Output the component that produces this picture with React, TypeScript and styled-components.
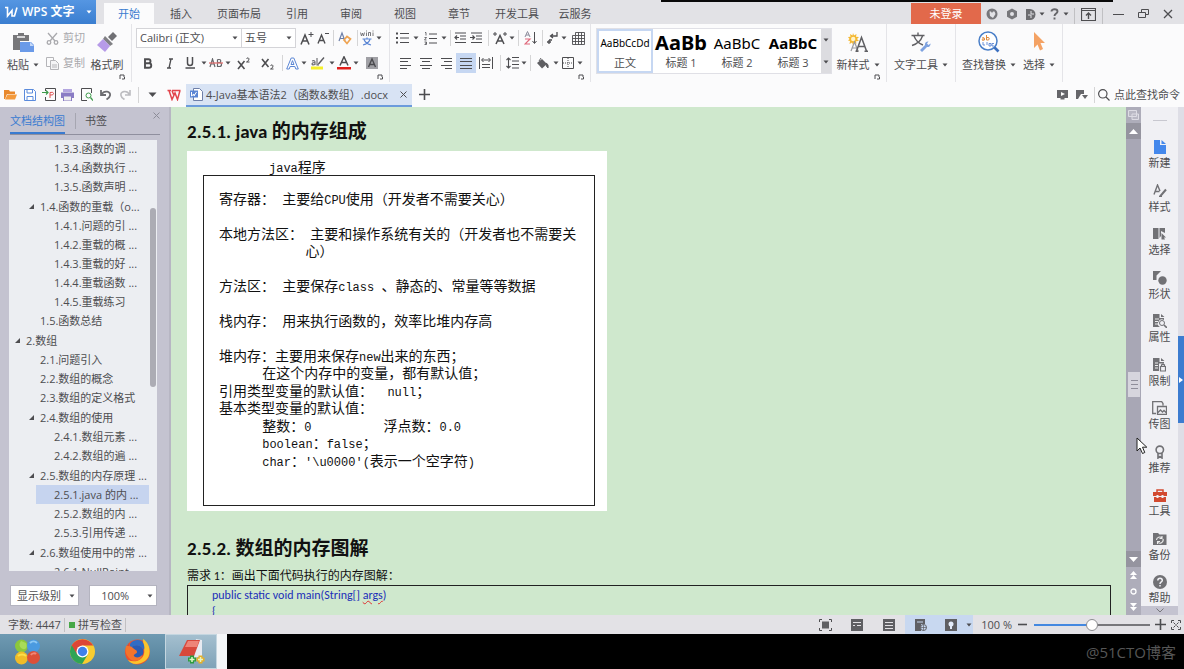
import React from "react";
import styled, { createGlobalStyle, css } from "styled-components";

const ui = `"Open Sans", "Noto Sans CJK SC", sans-serif`;
const ink = "#4d4d50";
const blue = "#3a7bd0";

const Global = createGlobalStyle`
  * { box-sizing: border-box; }
  html, body { margin: 0; padding: 0; }
  body { font: 11px/16px ${ui}; color: ${ink}; background: #fff; }
  button, select, input { font: inherit; color: inherit; margin: 0; padding: 0; border: 0; background: none; }
  svg { display: block; flex: none; }
  h2, p, ul { margin: 0; padding: 0; }
  ul { list-style: none; }
`;

/* ---------- icons ---------- */

const S = { fill: "none", stroke: "currentColor", strokeWidth: 1 } as const;

const art: Record<string, [number, number, React.ReactNode]> = {
  wps: [14, 12, <path d="M1 1.500h2.500v8.500l4.500-5.500v5.500l2.500 0 2.500-8.500" fill="none" stroke="#fff" strokeWidth="1.600" />],
  caret: [6, 4, <path d="M0.500 0.500h5l-2.500 3z" fill="currentColor" />],
  bigcaret: [9, 6, <path d="M0.500 0.500h8l-4 4.500z" fill="currentColor" />],
  corner: [6, 6, <path d="M1 5V1h4v2M3 5h2.500V3" {...S} />],
  paste: [22, 20, <><path d="M1 3h5V1h6v2h5v6H8v9H1z" fill="#77777a" /><path d="M5 4h8v2H5z" fill="#d8d8da" /><path d="M8 10h11l3 3v7H8z" fill="#6a9ae8" /><path d="M18 10v4h4z" fill="#c4d8f8" /></>],
  cut: [13, 13, <g fill="none" stroke="#a9a9ad" strokeWidth="1.300"><path d="M2 1l7 8M11 1L4 9" /><circle cx="3" cy="10.500" r="1.800" /><circle cx="10" cy="10.500" r="1.800" /></g>],
  copy: [13, 13, <g fill="none" stroke="#b4b4b8"><path d="M.5.5h7v9h-7z" /><path d="M4.500 3.500h5l3 3v6h-8z" fill="#f4f4f6" /><path d="M6 8h5M6 10h5" /></g>],
  brush: [20, 20, <><path d="M16 0l4 4-5 5-4-4z" fill="#707074" /><path d="M8 4l8 8-3 2-7-7z" fill="#808084" /><path d="M6 7l7 7-5 6-8-7z" fill="#b79be8" /></>],
  grow: [14, 13, <><path d="M1 12.500L5 3l4 9.500M2.500 9h5" fill="none" stroke="currentColor" strokeWidth="1.500" /><path d="M8.500 2.500h5M11 0v5" {...S} /></>],
  shrink: [13, 12, <><path d="M1 11.500L4.500 3l3.500 8.500M2.500 8.500h4" fill="none" stroke="currentColor" strokeWidth="1.400" /><path d="M8 1.500h4" {...S} /></>],
  clear: [14, 14, <><path d="M1 10L4 2l3 8M2 7.500h4" fill="none" stroke="#6d7fa8" strokeWidth="1.200" /><path d="M6 9l3-3.500 3.500 2.500-3.500 4.500z" fill="none" stroke="#efa452" strokeWidth="1.700" /></>],
  pinyin: [14, 16, <><path d="M.5 2.500l1 3.500 1-3 1 3 1-3.500M6.500 2.500V6M8.500 6V2.500h2V6M13 2.500V6M13 .5v1M6.500.5v1" fill="none" stroke="#6c6c70" strokeWidth=".9" /><path d="M2.500 9h9M7 7.500V9M4 9.500c1 2.500 3 4.500 7 5.500M10 9.500c-1 2.500-3 4.500-7 5.500" fill="none" stroke="#5b86d4" strokeWidth="1.200" /></>],
  bold: [10, 11, <path d="M2 1.200h3.500a2 2 0 010 4H2zM2 5.200h4a2.200 2.200 0 010 4.500H2z" fill="none" stroke="currentColor" strokeWidth="1.900" />],
  italic: [8, 11, <path d="M3 1h4M1 10h4M5 1L3 10" fill="none" stroke="currentColor" strokeWidth="1.300" />],
  underline: [10, 12, <path d="M2.500 0v6a2.500 2.500 0 005 0V0M0.500 11h9.500" fill="none" stroke="currentColor" strokeWidth="1.500" />],
  strike: [14, 10, <><path d="M1 9l2.500-8L6 9M2 6h3M8.500 1.500v7h2a2 2 0 000-4h-2M8.500 1.500h1.800a1.500 1.500 0 010 3" fill="none" stroke="#66666a" strokeWidth="1.200" /><path d="M0 5h14" stroke="#e07070" strokeWidth="1.300" /></>],
  sup: [14, 13, <><path d="M1 4l6.500 8M7.500 4L1 12" fill="none" stroke="currentColor" strokeWidth="1.600" /><path d="M9.500 1.500q2-1.500 2.500.3T9.500 5h3" {...S} /></>],
  sub: [14, 13, <><path d="M1 2l6.500 8M7.500 2L1 10" fill="none" stroke="currentColor" strokeWidth="1.600" /><path d="M9.500 8.500q2-1.500 2.500.3T9.500 12h3" {...S} /></>],
  effect: [13, 13, <path d="M.7 12L5.200 1h2.600l4.500 11h-2.500L8.900 9.500H4.100L3.200 12zM5 7.500h3L6.500 3.600z" fill="#fff" stroke="#5b86d4" strokeWidth="1" />],
  highlight: [14, 14, <><path d="M0 10.500h12v3H0z" fill="#f5f02a" /><path d="M1 5q3-1 3 1v3M4 6.500q-3 0-3 1.500T4 8.500M6 2v7h2" fill="none" stroke="#66666a" strokeWidth="1.100" /><path d="M12.500 1l1 1-5 6-2 1 .8-2z" fill="#5c5c60" /></>],
  fontcolor: [14, 14, <><path d="M0 11h14v2.500H0z" fill="#e0201c" /><path d="M3 9.500L7 .8l4 8.700M4.500 6.500h5" fill="none" stroke="currentColor" strokeWidth="1.500" /></>],
  shade: [12, 12, <><path d="M0 0h12v12H0z" fill="#a0a0a5" /><path d="M2.500 10L6 2l3.500 8M4 7.500h4" fill="none" stroke="#4a4a4e" strokeWidth="1.400" /></>],
  bullets: [13, 12, <><path d="M4 1.500h9M4 6h9M4 10.500h9" {...S} /><path d="M0 .5h2v2H0zM0 5h2v2H0zM0 9.500h2v2H0z" fill="currentColor" /></>],
  numbers: [13, 13, <><path d="M5 2h8M5 6.500h8M5 11h8" {...S} /><path d="M1 .5h1v3M.5 5.500h2L.5 8h2M.5 10h2v2.500h-2M1 11.200h1.500" {...S} strokeWidth=".8" /></>],
  outdent: [13, 12, <path d="M1 1h11M6 4h6M6 7h6M1 10.500h11M1 5.500h4M3 3.500l-2 2 2 2" {...S} strokeWidth="1.200" />],
  indent: [13, 12, <path d="M1 1h11M6 4h6M6 7h6M1 10.500h11M0 5.500h4M2.500 3.500l2 2-2 2" {...S} strokeWidth="1.200" />],
  spread: [14, 13, <><path d="M3 12L7 3.500l4 8.500M4.500 9h5" fill="none" stroke="currentColor" strokeWidth="1.500" /><path d="M0 2h4M2 0v4M10 2h4M12 0v4" {...S} /></>],
  sort: [13, 14, <><path d="M1 6l2.500-5.500L6 6M2 4h3" fill="none" stroke="#8a8a9a" /><path d="M1 8h5l-5 5h5" fill="none" stroke="#e06a7c" strokeWidth="1.200" /><path d="M10.500 1v11M8.500 10l2 2.500 2-2.500" {...S} /></>],
  ret: [12, 12, <path d="M11 0v4H5M7 2L4.500 4 7 6M1 10h4M3 8v4M3 8h3" {...S} strokeWidth="1.300" />],
  grid: [13, 13, <path d="M3.500.5h9v12h-12v-9h3zM.5 6.500h12M.5 9.500h12M3.500 3.500v9M6.500.5v12M9.500.5v12M3.500 3.500h9" {...S} strokeWidth=".9" />],
  left: [12, 11, <path d="M0 .5h11M0 3.500h8M0 7.500h11M0 10.500h7" {...S} />],
  center: [12, 11, <path d="M0 .5h12M2 3.500h8M0 7.500h12M2 10.500h8" {...S} />],
  right: [12, 11, <path d="M1 .5h11M4 3.500h8M1 7.500h11M5 10.500h7" {...S} />],
  justify: [12, 11, <path d="M0 .5h12M0 3.500h12M0 7.500h12M0 10.500h12" {...S} />],
  distribute: [14, 12, <path d="M.5 0v12M13.500 0v12M3 3h8M4.500 1L2.500 3l2 2M9.500 1l2 2-2 2M3 7.500h8M3 10.500h8" {...S} />],
  spacing: [13, 12, <path d="M6 .5h7M6 4h7M6 7.500h7M6 11h7M2.500 1v10M.5 3l2-2 2 2M.5 9l2 2 2-2" {...S} strokeWidth="1.100" />],
  bucket: [13, 11, <><path d="M1 5l5-4 5 5-5 4.500z" fill="#5f5f63" /><path d="M10 5q3 1 2 5-2-1-2-5M3 3L5 0" fill="#5f5f63" stroke="#5f5f63" /></>],
  border: [12, 12, <><path d="M.5.5h11v11H.5z" {...S} /><path d="M6 1v10M1 6h10" {...S} strokeDasharray="1 1" /></>],
  newstyle: [20, 19, <><path d="M5 0l1 2.500L8.500 1 8 3.800l3 .2-2 2 2 2-3 .2.5 2.600L6 9.500 5 12 4 9.500 1.500 11 2 8l-2-.5L1.500 6 0 4l2.500-.2L2 1l2.500 1.500z" fill="#f4b832" /><circle cx="5.200" cy="6" r="2.200" fill="#fff3c8" /><path d="M3 18l3.500-9L10 18M4.500 15h4" fill="none" stroke="#9a9a9e" strokeWidth="1.200" /><path d="M8.500 18L13.500 4.500 18.500 18M10.500 13.500h6M7.500 18.300h3M16.500 18.300h3.500" fill="none" stroke="#606064" strokeWidth="1.500" /></>],
  texttool: [20, 20, <><path d="M.5 3.500h13M7 .5v3M3 4c1.500 4 5 7.500 9 9M11.500 4C10 8.500 6 12 1 13.500" fill="none" stroke="#606064" strokeWidth="1.400" /><path d="M9 18l5-5a3 3 0 013.500-3.500L16 11.500l1.500 1.500 2-1.500A3 3 0 0116 15l-5 5z" fill="#7ea2e0" /></>],
  find: [22, 22, <><circle cx="10" cy="10" r="9" fill="#fff" stroke="#4a7fc8" strokeWidth="1.500" /><path d="M16.500 16.500l4 4" stroke="#3c70c0" strokeWidth="2.600" /><path d="M4 7q2.500-1 2.500.5V9M6.500 7.800q-2.500 0-2.500 1T6.500 9M8.500 4v5h1.500a1.200 1.200 0 000-2.500H8.500" fill="none" stroke="#e08a3c" /><path d="M5 11v3h2M9 11v3M11 12.500h2V15h-2zM16 12.500h-2V15h2" fill="none" stroke="#5b86d4" strokeWidth=".9" /></>],
  pointer: [13, 20, <path d="M1 0l11 11H7.500l2.500 6-3 1.500-2.500-6L1 16z" fill="#f4a264" />],
  shirt: [12, 12, <><circle cx="6" cy="6" r="5.500" fill="#77777b" /><path d="M3.500 3.500h1.500l1 1.500 1-1.500h1.500L9.500 6 7 10 4 8z" fill="#e2e2e6" /></>],
  gear: [12, 12, <path fillRule="evenodd" d="M6 .5l5 2.800v5.400L6 11.500 1 8.700V3.300zM6 4a2 2 0 100 4 2 2 0 000-4z" fill="#77777b" />],
  doc: [11, 11, <><path d="M1 0h4a5.500 5.500 0 010 11H1z" fill="#6c6c70" /><path d="M3 6h3v3M6 2v3h3" fill="none" stroke="#e2e2e6" /></>],
  help: [9, 12, <path d="M1.500 3.500c0-3 6-3 6 0 0 2-3 2-3 4.500M4.500 9.500v2" fill="none" stroke="#66666a" strokeWidth="1.900" />],
  ribbon: [15, 13, <><path d="M.5.500h14v12H.5zM.5 2.500h14" {...S} strokeWidth="1.200" /><path d="M7.500 11V5M5 7.500L7.500 5 10 7.500" {...S} strokeWidth="1.400" /></>],
  min: [11, 3, <path d="M0 1.500h11" {...S} />],
  restore: [11, 10, <path d="M.5 3.500h7v5h-7zM3.500 3V.5h7v5H8" {...S} />],
  close: [10, 10, <path d="M1 1l8 8M9 1L1 9" {...S} strokeWidth="1.300" />],
  closeThin: [7, 7, <path d="M.5.5l6 6M6.500.5l-6 6" {...S} />],
  folder: [13, 11, <><path d="M0 1h5l1 1.500h5V5H3L1 10H0z" fill="#e8882c" /><path d="M3.500 5.500H13L11 10.500H1z" fill="#f49a3c" /></>],
  save: [12, 12, <><path d="M.5.500h9l2 2v9H.5z" fill="#fff" stroke="#5b8bdc" /><path d="M3 .5v3.500h5.500V.5M3 11.500V7.500h6v4" fill="none" stroke="#5b8bdc" /></>],
  pdf: [14, 13, <><path d="M3.500 3V.5h10v12h-10V9" {...S} /><path d="M0 4.500h6M4 2.500l2 2-2 2" fill="none" stroke="#3d9a4a" strokeWidth="1.200" /><path d="M8 10V4.500q3.500-1 3.500 1t-3.500 1.500" fill="none" stroke="#e05252" /></>],
  print: [13, 12, <><path d="M2 0h9v3H2z" fill="#b3a6e0" /><path d="M0 3.500h13v5.500H0z" fill="#8a7cc4" /><path d="M2.500 7h8v5h-8z" fill="#eee" stroke="#8a7cc4" /></>],
  preview: [12, 13, <><path d="M10.500 5V.5h-10v12H6" {...S} /><circle cx="7.500" cy="7.500" r="2.500" fill="none" stroke="#3d9a4a" /><path d="M9.500 9.500l2.500 3" stroke="#3d9a4a" strokeWidth="1.300" /></>],
  undo: [12, 11, <path d="M1 1v5h5M1.500 5.500C4 1 11 2 10 6.500 9.500 9 8 9.500 6.500 10.500" fill="none" stroke="#6c6c70" strokeWidth="1.800" />],
  redo: [12, 11, <path d="M11 1v5H6M10.500 5.500C8 1 1 2 2 6.500 2.500 9 4 9.500 5.500 10.500" fill="none" stroke="#bcbcc0" strokeWidth="1.600" />],
  redw: [14, 12, <path d="M.5 1.500h3.500M5 1.500h8.500M2 1.500l3 9 3-6.500 2.500 6.500 2.500-9M5 1.500l1.500 4" fill="none" stroke="#e2454c" strokeWidth="1.500" />],
  wdoc: [13, 13, <><path d="M3.500.5h6l3 3v9h-9z" fill="#fff" stroke="#6e7fa8" /><path d="M0 2.500h8v7H0z" fill="#5b86d4" /><path d="M1.500 4v4l2.500-2v2l2.500-4" fill="none" stroke="#fff" /></>],
  plus: [11, 11, <path d="M5.500 0v11M0 5.500h11" {...S} strokeWidth="1.600" />],
  present: [11, 10, <><path d="M0 0h11v8H7.500v1.500h-4V8H0z" fill="#66666a" /><path d="M4 2l4 2-4 2z" fill="#fff" /></>],
  flag: [12, 10, <><path d="M0 0h8v4H5L2 9H0z" fill="#66666a" /><path d="M6 5h6L9 9z" fill="#66666a" /></>],
  search: [12, 12, <path d="M8 8l3.500 3.500M9 4.800a4.200 4.200 0 11-8.400 0 4.200 4.200 0 018.400 0z" {...S} strokeWidth="1.200" />],
  tri: [5, 5, <path d="M5 0v5H0z" fill="currentColor" />],
  newdoc: [12, 14, <path d="M0 0h6v5h6v9H0zM7.500 0L12 4H7.500z" fill="#4488ec" />],
  style: [14, 13, <><path d="M1 10.500L4.500 1 7 7M2.500 7.500h4" {...S} strokeWidth="1.400" /><path d="M7 12.500l6-7" {...S} strokeWidth="2" /><path d="M6 12.500h3" {...S} /></>],
  select: [13, 12, <><path d="M0 0h5.500v11H0zM6.500 0H12v5L8 3v5l-1.500 2z" fill="#717175" /><path d="M8.500 5l4.500 4.500h-2l1 2H10l-1.500 0z" fill="#717175" /></>],
  shape: [14, 14, <><path d="M0 0h8L3.500 4.500V9H0z" fill="#717175" /><circle cx="9.500" cy="9.500" r="4.200" fill="#717175" /></>],
  property: [14, 14, <><path d="M0 0h6.500v4H11v2a4 4 0 00-4 7H0zM8 0l3.500 3H8z" fill="#717175" /><path d="M2 5h4M2 7.500h3M2 10h3" stroke="#eee" /><circle cx="9" cy="9" r="2.500" {...S} /><path d="M11 11l3 3" {...S} strokeWidth="1.600" /></>],
  limit: [13, 14, <><path d="M0 0h6.500v4H11v1.500H6V13H0zM8 0l3.500 3H8z" fill="#717175" /><path d="M2 5h3M2 7.500h3M2 10h3" stroke="#eee" /><path d="M7.500 8.500h5V13h-5zM8.500 8.500V7q1.500-1.500 3 0v1.500" {...S} strokeWidth="1.200" /></>],
  picture: [15, 14, <path d="M4 12.500H.7V.700h9L11 2.500v2M5.500 5.500h9v8h-9zM5.500 12l3-3 2 2 1.500-1.500 2.500 2.500" {...S} strokeWidth="1.300" />],
  award: [10, 14, <path d="M8.500 4.800a3.700 3.700 0 11-7.400 0 3.700 3.700 0 017.400 0zM3 8v5l2-1.500L7 13V8" {...S} strokeWidth="1.600" />],
  toolbox: [14, 13, <><path d="M4 3V1h6v2" fill="none" stroke="#d24a30" strokeWidth="1.500" /><path d="M0 3h14v4H0zM1 8h12v5H1z" fill="#d24a30" /><path d="M3.500 6h2v3h-2zM8.500 6h2v3h-2z" fill="#f0f0f4" /></>],
  backup: [14, 12, <><path d="M0 0h5l1.500 1.500H13.500V12H0z" fill="#717175" /><path d="M3.500 7a3.200 3.200 0 015.500-2M10 6a3.200 3.200 0 01-5.500 3M9 3v2.500H6.500M4.500 11V8.500H7" fill="none" stroke="#eee" strokeWidth="1.100" /></>],
  question: [14, 14, <><circle cx="7" cy="7" r="7" fill="#717175" /><path d="M4.800 5.500c0-3 4.500-3 4.500 0C9.300 7 7 7 7 9M7 10v1.500" fill="none" stroke="#f0f0f4" strokeWidth="1.500" /></>],
  full: [13, 12, <><path d="M3 2.500h7v7H3z" fill="#5f5f63" /><path d="M.5 3V.5H3M10 .5h2.500V3M12.500 9v2.500H10M3 11.500H.5V9" {...S} /></>],
  readview: [12, 12, <><path d="M0 0h12v12H0z" fill="#5f5f63" /><path d="M2 3.500h8M6 6.500h4M2 6.500h2" stroke="#e3e1e5" /></>],
  outline: [12, 12, <><path d="M0 0h12v12H0z" fill="#5f5f63" /><path d="M2 3.500h8M2 6.500h8M2 9.500h8" stroke="#e3e1e5" /></>],
  web: [12, 12, <><path d="M0 0h10v5H6v7H0z" fill="#5f5f63" /><path d="M2 3h6" stroke="#c8d8f0" /><circle cx="8.500" cy="8.500" r="3" fill="#c8d8f0" stroke="#5f5f63" /><path d="M5.500 8.500h6M8.500 5.500v6" stroke="#5f5f63" strokeWidth=".7" /></>],
  bulb: [12, 12, <><path d="M0 0h12v12H0z" fill="#5f5f63" /><circle cx="6" cy="5" r="2.500" fill="#e4ecfa" /><path d="M5 7h2v3H5z" fill="#e4ecfa" /></>],
  minus: [9, 3, <path d="M0 1.500h9" {...S} strokeWidth="1.600" />],
  expand: [10, 10, <path d="M.5 3V.5H3M7 .5h2.500V3M9.500 7v2.500H7M3 9.500H.5V7M2.500 2.500l2 2M7.500 2.500l-2 2M7.500 7.500l-2-2M2.500 7.500l2-2" {...S} />],
  up: [9, 5, <path d="M0 5h9L4.500 0z" fill="#fff" />],
  down: [9, 5, <path d="M0 0h9L4.500 5z" fill="#fff" />],
  pageup: [7, 8, <path d="M0 4h7L3.500 0zM0 8h7L3.500 4z" fill="#fff" />],
  pagedown: [7, 8, <path d="M0 0h7L3.500 4zM0 4h7L3.500 8z" fill="#fff" />],
  ring: [7, 7, <circle cx="3.500" cy="3.500" r="2.500" fill="none" stroke="#fff" strokeWidth="1.300" />],
  ruler: [11, 10, <path d="M.5.5h8v6h-8zM4 4h6.500v5.500H4z" fill="#b9b8c4" stroke="#dddce4" />],
  chevron: [8, 5, <path d="M.5.5L4 4 7.500.500" fill="none" stroke="#77777b" />],
  play: [4, 6, <path d="M0 0l4 3-4 3z" fill="#fff" />],
  cursor: [12, 18, <path d="M1 1v13l3-3 2.500 5.500 2.300-1L6.500 10.200h4.300z" fill="#fff" stroke="#222" />],
  clover: [27, 27, <><circle cx="7.500" cy="8" r="6.500" fill="#8cc83c" /><circle cx="19.500" cy="8" r="6.500" fill="#4a9ae0" /><circle cx="7.500" cy="20" r="6.500" fill="#f0bc28" /><circle cx="19.500" cy="19.500" r="6.500" fill="#dc5038" /><path d="M7 3c-4 5 1 9 4 8 2-1 2-4 1-6" fill="#a8dc58" /><path d="M4 18c2-2 6-2 8 0" fill="none" stroke="#fbe04a" strokeWidth="2" /><path d="M16 5c2-2 5-2 7 0" fill="none" stroke="#8cc8f4" strokeWidth="2" /><path d="M17 17c1-2 4-2 5-1" fill="none" stroke="#f08878" strokeWidth="2" /></>],
  chrome: [25, 25, <><circle cx="12.500" cy="12.500" r="12.500" fill="#f8cc30" /><path d="M12.500 12.500L1.700 6.200a12.500 12.500 0 0010.400 18.800l5.700-9.500z" fill="#2fa455" /><path d="M1.700 6.200A12.500 12.500 0 0123.300 6.500H12.500L7 15z" fill="#dc4636" /><circle cx="12.500" cy="12.500" r="6" fill="#fff" /><circle cx="12.500" cy="12.500" r="4.700" fill="#3f80ea" /></>],
  firefox: [27, 27, <><circle cx="13.500" cy="14" r="12.500" fill="#f0502c" /><path d="M19 1c8 5 9 17 2 22s-15 3-17-1c6 3 14 1 16-6 1-5-1-9-1-15z" fill="#fcc42c" /><path d="M4 5c0 3 0 4 2 5 4-4 10-4 13 1 2 6-3 10-7 9-4 0-7-4-7-7z" fill="#2a5cb4" /><path d="M6 6c2-4 8-5 12-3 2 3 3 6 2 9-3-5-8-6-14-2z" fill="#2f6cc4" /><path d="M2 8c3 0 5 0 7 2s4 2 4 4-4 2-3 4 6 2 8-1c0 6-9 8-13 3S1 13 2 8z" fill="#f4742c" /></>],
  editor: [27, 27, <><path d="M18 1l6 1v16l-8 2z" fill="#e8eaf0" /><path d="M9 2h13l-6 16H1z" fill="#d8483c" /><path d="M10 3h11l-2 6H7z" fill="#ee8478" /><path d="M14 17.500v8M10 21.500h8" stroke="#2c9c3c" strokeWidth="4" /><path d="M22.500 17.500v8M18.500 21.500h8" stroke="#e8b024" strokeWidth="4" /><path d="M14 19v5M11.500 21.500h5M22.500 19v5M20 21.500h5" stroke="#e4f4c8" strokeWidth="1.500" /></>],
};

const Icon = ({ name }: { name: string }) => {
  const [w, h, node] = art[name];
  return <svg width={w} height={h} viewBox={`0 0 ${w} ${h}`} aria-hidden="true">{node}</svg>;
};

/* ---------- shared parts ---------- */

const Window = styled.div`
  position: relative;
  display: flex;
  flex-direction: column;
  height: 100vh;
  min-width: 1080px;
  overflow: hidden;
`;

const Cell = styled.button<{ $w?: number; $on?: boolean }>`
  width: ${(p) => p.$w ?? 20}px;
  height: 20px;
  display: flex;
  align-items: center;
  justify-content: center;
  flex: none;
  background: ${(p) => (p.$on ? "#c6d7f2" : "none")};
`;

const Rule = styled.span<{ $w?: number; $h?: number }>`
  width: ${(p) => p.$w ?? 4}px;
  height: ${(p) => p.$h ?? 16}px;
  flex: none;
  display: flex;
  justify-content: center;
  &::before { content: ""; width: 1px; background: rgba(0, 0, 0, 0.15); }
`;

const Row = styled.div<{ $pad?: number }>`
  display: flex;
  align-items: center;
  padding-left: ${(p) => p.$pad ?? 0}px;
`;

const Spacer = styled.div` flex: 1; `;

type Item = [string, number?] | "|" | "||" | "v";

const Tools = ({ items, on }: { items: Item[]; on?: string }) => (
  <>
    {items.map((it, i) =>
      it === "|" ? <Rule key={i} /> :
      it === "||" ? <Rule key={i} $w={8} /> :
      it === "v" ? <Cell key={i} $w={8} aria-label="more"><Icon name="caret" /></Cell> :
      <Cell key={i} $w={it[1]} $on={on === it[0]} aria-label={it[0]}><Icon name={it[0]} /></Cell>
    )}
  </>
);

/* ---------- title bar ---------- */

const TitleBar = styled.header`
  display: flex;
  align-items: flex-end;
  height: 24px;
  flex: none;
  background: #e2e2e6;
  padding-right: 4px;
`;
const Brand = styled.button`
  display: flex;
  align-items: center;
  gap: 4px;
  width: 96px;
  height: 24px;
  padding: 0 4px;
  background: linear-gradient(#5596e2, #3a7ed0);
  color: #fff;
  font-size: 12px;
  font-weight: 600;
  white-space: nowrap;
  & > span { flex: 1; text-align: left; }
`;
const Tabs = styled.nav`
  display: flex;
  padding-left: 8px;
`;
const Tab = styled.button<{ $active?: boolean }>`
  height: 21px;
  min-width: ${(p) => (p.$active ? 50 : 54)}px;
  padding: 0 9px;
  background: ${(p) => (p.$active ? "#fbfbfc" : "none")};
  color: ${(p) => (p.$active ? blue : ink)};
`;
const TopLine = styled.div`
  position: absolute;
  top: 0;
  left: 661px;
  right: 71px;
  height: 2px;
  background: #0a0a0a;
`;
const Login = styled.button`
  width: 70px;
  height: 21px;
  margin-right: 1px;
  background: #e2694b;
  color: #fff;
`;

/* ---------- ribbon ---------- */

const Ribbon = styled.section`
  display: flex;
  height: 58px;
  flex: none;
  background: #fbfbfc;
`;
const Group = styled.div<{ $w: number }>`
  position: relative;
  display: flex;
  width: ${(p) => p.$w}px;
  flex: none;
  border-right: 1px solid #e4e4e8;
  padding-top: 4px;
`;
const Corner = styled.span`
  position: absolute;
  right: 6px;
  bottom: 2px;
`;
const Stack = styled.div<{ $pad?: number }>`
  display: flex;
  flex-direction: column;
  gap: 5px;
  padding-left: ${(p) => p.$pad ?? 0}px;
`;
const Big = styled.button<{ $w: number }>`
  width: ${(p) => p.$w}px;
  height: 46px;
  display: grid;
  grid-template-rows: 28px 18px;
  align-items: center;
  justify-items: center;
  flex: none;
`;
const Label = styled.span<{ $off?: boolean }>`
  display: flex;
  align-items: center;
  gap: 4px;
  white-space: nowrap;
  color: ${(p) => (p.$off ? "#a9a9ad" : ink)};
`;
const SmallTool = styled.button`
  display: flex;
  align-items: center;
  gap: 4px;
  height: 20px;
`;
const FontBox = styled.label<{ $w: number }>`
  display: flex;
  align-items: center;
  width: ${(p) => p.$w}px;
  height: 20px;
  border: 1px solid #d4d4d8;
  margin-right: -1px;
  padding: 0 3px;
  background: #fff;
`;
const bareSelect = css`
  appearance: none;
  flex: 1;
  min-width: 0;
  height: 16px;
  outline: 0;
`;
const FontSelect = styled.select` ${bareSelect} `;

const Gallery = styled.div`
  display: flex;
  height: 46px;
  margin-left: 5px;
  border: 1px solid #e0e0e6;
  background: #fff;
`;
const StyleCard = styled.button<{ $on?: boolean }>`
  width: 56px;
  border: 2px solid ${(p) => (p.$on ? "#c6d7f2" : "#fff")};
  display: grid;
  grid-template-rows: 24px 16px;
  align-items: center;
`;
const Sample = styled.span<{ $size: number; $bold?: boolean }>`
  white-space: nowrap;
  color: #000;
  font: ${(p) => (p.$bold ? 700 : 400)} ${(p) => p.$size}px/24px "Noto Sans", ${ui};
`;
const GalleryScroll = styled.div`
  width: 10px;
  display: flex;
  flex-direction: column;
  justify-content: space-around;
  align-items: center;
  background: #dcdce0;
`;

/* ---------- quick access bar ---------- */

const QuickBar = styled.div`
  display: flex;
  align-items: center;
  height: 25px;
  flex: none;
  background: #fbfbfc;
  padding-left: 1px;
`;
const FileTab = styled.div`
  display: flex;
  align-items: center;
  gap: 3px;
  width: 226px;
  height: 23px;
  align-self: flex-end;
  padding: 0 1px 0 4px;
  background: #d8e3f4;
  border-bottom: 2px solid #6c9bdc;
  & > span { flex: 1; white-space: nowrap; }
`;
const Command = styled.label`
  display: flex;
  align-items: center;
  gap: 4px;
  width: 88px;
  padding-left: 2px;
  & > input { flex: 1; min-width: 0; outline: 0; }
  & > input::placeholder { color: ${ink}; opacity: 1; }
`;

/* ---------- outline pane ---------- */

const Main = styled.main`
  display: flex;
  flex: 1;
  min-height: 0;
`;
const Pane = styled.aside`
  display: flex;
  flex-direction: column;
  width: 171px;
  flex: none;
  background: #c4c3d0;
  border-right: 2px solid #b7b6c3;
  padding: 0 12px 9px 9px;
`;
const PaneTabs = styled.div`
  display: flex;
  align-items: flex-end;
  height: 28px;
  margin: 0 -3px 5px 1px;
  border-bottom: 1px solid #8f8f9e;
`;
const PaneTab = styled.button<{ $on?: boolean }>`
  height: 24px;
  padding-bottom: ${(p) => (p.$on ? 0 : 2)}px;
  color: ${(p) => (p.$on ? blue : ink)};
  border-bottom: ${(p) => (p.$on ? `2px solid ${blue}` : "0")};
`;
const PaneRule = styled(Rule)` align-self: center; `;
const PaneClose = styled.button`
  margin: 5px 0 auto auto;
  color: #8c8c98;
`;
const Tree = styled.div`
  position: relative;
  flex: 1;
  min-height: 0;
  overflow: hidden;
  background: #eceef2;
  & > ul { margin-top: -1px; }
`;
const TreeThumb = styled.span`
  position: absolute;
  right: 1px;
  top: 68px;
  width: 6px;
  height: 179px;
  border-radius: 3px;
  background: #acacb4;
`;
const TreeRow = styled.li<{ $level: number; $parent?: boolean; $on?: boolean }>`
  display: flex;
  align-items: center;
  gap: 6px;
  height: 19px;
  line-height: 19px;
  white-space: pre;
  margin: ${(p) => (p.$parent ? 1 : 0)}px 8px 0 ${(p) => p.$level * 14 - 8}px;
  padding-left: ${(p) => (p.$parent ? 0 : 11)}px;
  ${(p) => p.$on && css`
    margin-left: 27px;
    padding-left: 18px;
    background: #c6d4ef;
  `}
`;
const PaneFoot = styled.div`
  display: grid;
  grid-template-columns: 1fr 1fr;
  gap: 10px;
  margin: 14px 0 0 1px;
`;
const Drop = styled.label`
  display: flex;
  align-items: center;
  height: 21px;
  padding: 0 3px 0 6px;
  background: #fff;
  border: 1px solid #b4b4c0;
  & > select { ${bareSelect} }
`;

/* ---------- document ---------- */

const Doc = styled.article`
  flex: 1;
  min-width: 0;
  overflow: hidden;
  background: #cfe8cd;
  color: #111;
  padding: 12px 15px 0 16px;
  display: flex;
  flex-direction: column;
  & > * { flex: none; }
`;
const Heading = styled.h2`
  font: 700 19px/26px Carlito, Lato, "Noto Sans CJK SC", sans-serif;
  height: 26px;
`;
const Figure = styled.div`
  width: 420px;
  height: 360px;
  margin: 6px 0 25px;
  padding: 7px 12px 5px 16px;
  background: #fff;
  font: 14px/17px "Noto Sans CJK SC", sans-serif;
  white-space: pre;
  display: flex;
  flex-direction: column;
`;
const Caption = styled.p`
  height: 17px;
  padding-left: 66px;
`;
const Frame = styled.div`
  flex: 1;
  border: 1px solid #222;
  padding: 14px 0 0 15px;
`;
const Block = styled.div<{ $tight?: boolean }>`
  margin-bottom: ${(p) => (p.$tight ? 1 : 18)}px;
`;
const TextLine = styled.div` height: 17px; `;
const Half = styled.span` font: 12px/1 "Liberation Mono", monospace; `;
const Para = styled.p`
  height: 23px;
  padding-top: 5px;
  font: 12px/18px Carlito, Lato, "Noto Sans CJK SC", sans-serif;
`;
const CodeBox = styled.div`
  min-height: 60px;
  border: 1px solid #222;
  padding: 1px 0 0 24px;
  font: 12px/16px Carlito, Lato, sans-serif;
  color: #1c2fb8;
`;
const Typo = styled.span` text-decoration: underline wavy #e03030 1px; `;

const Line = ({ text }: { text: string }) => (
  <TextLine>
    {text.split(/([\x20-\x7e]+)/).map((part, i) => (i % 2 ? <Half key={i}>{part}</Half> : part))}
  </TextLine>
);

/* ---------- scroll bar and task rail ---------- */

const Scroll = styled.div`
  width: 15px;
  flex: none;
  display: flex;
  flex-direction: column;
  align-items: stretch;
  background: #a8a7b5;
`;
const ScrollBtn = styled.button<{ $dark?: boolean }>`
  height: 16px;
  display: grid;
  place-items: center;
  background: ${(p) => (p.$dark ? "#95949f" : "#aeadba")};
`;
const Track = styled.div<{ $grow: number }>` flex: ${(p) => p.$grow} 0 0; `;
const Thumb = styled.div`
  height: 25px;
  margin: 0 1px 0 2px;
  background: #d6d5dd;
  display: flex;
  flex-direction: column;
  align-items: center;
  justify-content: center;
  gap: 3px;
  & > i { width: 7px; height: 1px; background: #8f8e9a; }
`;
const Rail = styled.aside`
  width: 37px;
  flex: none;
  display: flex;
  flex-direction: column;
  background: #f0f0f4;
`;
const Grip = styled.span`
  width: 14px;
  height: 1px;
  margin: 13px auto 7px;
  background: #c8c8d0;
`;
const RailItem = styled.button`
  flex: 1;
  display: grid;
  grid-template-rows: 16px 16px;
  align-content: end;
  justify-items: center;
  align-items: center;
  color: #717175;
  & > span { color: ${ink}; }
`;
const RailMore = styled.button`
  height: 9px;
  display: grid;
  place-items: center;
  background: #c4c3d0;
`;
const Edge = styled.div`
  width: 6px;
  flex: none;
  display: flex;
  flex-direction: column;
  background: #dedee6;
`;
const Handle = styled.button`
  height: 87px;
  display: grid;
  place-items: center;
  background: #3c7cd0;
`;
const Cursor = styled.div`
  position: absolute;
  right: 36px;
  top: 437px;
`;

/* ---------- status bar and taskbar ---------- */

const Status = styled.footer`
  display: flex;
  align-items: center;
  height: 19px;
  flex: none;
  padding-left: 8px;
  background: #e3e2e6;
  white-space: nowrap;
`;
const Dot = styled.i`
  width: 6px;
  height: 6px;
  margin-right: 3px;
  background: #48a848;
`;
const Views = styled.div`
  display: flex;
  align-items: center;
  align-self: stretch;
  margin-right: 8px;
`;
const ViewOn = styled.div`
  display: flex;
  align-items: center;
  align-self: stretch;
  background: #c8d8f0;
`;
const Zoom = styled.input`
  appearance: none;
  width: 116px;
  height: 12px;
  margin: 0 2px;
  background: linear-gradient(90deg, #4488e0 50%, #77777b 50%) center / 100% 2px no-repeat;
  &::-webkit-slider-thumb {
    appearance: none;
    width: 12px;
    height: 12px;
    border-radius: 50%;
    border: 1px solid #8c8c90;
    background: #fff;
  }
`;
const Taskbar = styled.footer`
  display: flex;
  height: 35px;
  flex: none;
  background: #000;
`;
const Dock = styled.div`
  display: flex;
  width: 227px;
  flex: none;
  border-right: 10px solid #f4f6f8;
  background: linear-gradient(#6f9ab2, #527f99);
`;
const DockApp = styled.button<{ $on?: boolean }>`
  width: ${(p) => (p.$on ? 52 : 55)}px;
  display: grid;
  place-items: center;
  background: ${(p) => (p.$on ? "linear-gradient(#a4bfcf, #7fa3b8)" : "none")};
  border: ${(p) => (p.$on ? "1px solid #c4d6e0" : "0")};
`;
const Mark = styled.span`
  margin: auto 8px auto auto;
  color: #565656;
  font-size: 15px;
  line-height: 20px;
`;

/* ---------- content ---------- */

const tabs = ["开始", "插入", "页面布局", "引用", "审阅", "视图", "章节", "开发工具", "云服务"];

const tree: [number, string, string?][] = [
  [3, "1.3.3.函数的调 ..."], [3, "1.3.4.函数执行 ..."], [3, "1.3.5.函数声明 ..."],
  [2, "1.4.函数的重载（o...", "p"], [3, "1.4.1.问题的引 ..."], [3, "1.4.2.重载的概 ..."],
  [3, "1.4.3.重载的好 ..."], [3, "1.4.4.重载函数 ..."], [3, "1.4.5.重载练习"],
  [2, "1.5.函数总结"], [1, "2.数组", "p"], [2, "2.1.问题引入"], [2, "2.2.数组的概念"],
  [2, "2.3.数组的定义格式"], [2, "2.4.数组的使用", "p"], [3, "2.4.1.数组元素 ..."],
  [3, "2.4.2.数组的遍 ..."], [2, "2.5.数组的内存原理 ...", "p"], [3, "2.5.1.java 的内 ...", "on"],
  [3, "2.5.2.数组的内 ..."], [3, "2.5.3.引用传递 ..."], [2, "2.6.数组使用中的常 ...", "p"],
  [3, "2.6.1.NullPoint..."],
];

const blocks: { lines: string[]; tight?: boolean }[] = [
  { lines: ["寄存器： 主要给CPU使用（开发者不需要关心）"] },
  { lines: ["本地方法区： 主要和操作系统有关的（开发者也不需要关", "            心）"] },
  { lines: ["方法区： 主要保存class 、静态的、常量等等数据"] },
  { lines: ["栈内存： 用来执行函数的，效率比堆内存高"] },
  { lines: ["堆内存：主要用来保存new出来的东西；", "      在这个内存中的变量，都有默认值；"], tight: true },
  { lines: ["引用类型变量的默认值：  null；", "基本类型变量的默认值："], tight: true },
  { lines: ["      整数：0          浮点数：0.0", "      boolean：false；"], tight: true },
  { lines: ["      char：'\\u0000'(表示一个空字符)"], tight: true },
];

const samples: [string, string, number, boolean][] = [
  ["AaBbCcDd", "正文", 10, false], ["AaBb", "标题 1", 20, true],
  ["AaBbC", "标题 2", 15, false], ["AaBbC", "标题 3", 15, true],
];

const rail: [string, string][] = [
  ["newdoc", "新建"], ["style", "样式"], ["select", "选择"], ["shape", "形状"], ["property", "属性"],
  ["limit", "限制"], ["picture", "传图"], ["award", "推荐"], ["toolbox", "工具"], ["backup", "备份"], ["question", "帮助"],
];

export default function App() {
  return (
    <Window>
      <Global />
      <TitleBar>
        <Brand><Icon name="wps" /><span>WPS 文字</span><Icon name="caret" /></Brand>
        <Tabs>{tabs.map((t, i) => <Tab key={t} $active={i === 0}>{t}</Tab>)}</Tabs>
        <Spacer />
        <Login>未登录</Login>
        <Tools items={[["shirt"], ["gear"], ["doc", 16], "v", ["help", 16], "v", "||", ["ribbon"], "||", ["min", 24], ["restore", 26], ["close", 24]]} />
      </TitleBar>
      <TopLine />

      <Ribbon>
        <Group $w={132}>
          <Big $w={46}><Icon name="paste" /><Label>粘贴<Icon name="caret" /></Label></Big>
          <Stack>
            <SmallTool><Icon name="cut" /><Label $off>剪切</Label></SmallTool>
            <SmallTool><Icon name="copy" /><Label $off>复制</Label></SmallTool>
          </Stack>
          <Big $w={44}><Icon name="brush" /><Label>格式刷</Label></Big>
          <Corner><Icon name="corner" /></Corner>
        </Group>
        <Group $w={258}>
          <Stack $pad={4}>
            <Row>
              <FontBox $w={106}><FontSelect aria-label="字体"><option>Calibri (正文)</option></FontSelect><Icon name="caret" /></FontBox>
              <FontBox $w={55}><FontSelect aria-label="字号"><option>五号</option></FontSelect><Icon name="caret" /></FontBox>
              <Rule $h={0} />
              <Tools items={[["grow", 16], ["shrink", 16], "|", ["clear"], "|", ["pinyin", 16], "v"]} />
            </Row>
            <Row>
              <Tools items={[["bold", 24], ["italic"], ["underline"], "v", ["strike", 16], "v", ["sup", 24], ["sub", 24], "|", ["effect", 16], "v", ["highlight"], "v", ["fontcolor", 16], "v", ["shade", 24]]} />
            </Row>
          </Stack>
          <Corner><Icon name="corner" /></Corner>
        </Group>
        <Group $w={201}>
          <Stack $pad={2}>
            <Row>
              <Tools items={[["bullets"], "v", ["numbers"], "v", "|", ["outdent", 16], ["indent", 16], "||", ["spread", 16], "v", "|", ["sort"], "|", ["ret", 16], "v", ["grid"]]} />
            </Row>
            <Row $pad={4}>
              <Tools on="justify" items={[["left"], ["center"], ["right"], ["justify"], ["distribute"], "||", ["spacing", 16], "v", "|", ["bucket"], "v", ["border", 16], "v"]} />
            </Row>
          </Stack>
          <Corner><Icon name="corner" /></Corner>
        </Group>
        <Group $w={296}>
          <Gallery>
            {samples.map(([text, name, size, bold], i) => (
              <StyleCard key={name} $on={i === 0}>
                <Sample $size={size} $bold={bold}>{text}</Sample>
                <span>{name}</span>
              </StyleCard>
            ))}
            <GalleryScroll><Icon name="caret" /><Icon name="caret" /></GalleryScroll>
          </Gallery>
          <Big $w={52}><Icon name="newstyle" /><Label>新样式<Icon name="caret" /></Label></Big>
          <Corner><Icon name="corner" /></Corner>
        </Group>
        <Group $w={69}>
          <Big $w={68}><Icon name="texttool" /><Label>文字工具<Icon name="caret" /></Label></Big>
        </Group>
        <Group $w={107}>
          <Big $w={66}><Icon name="find" /><Label>查找替换<Icon name="caret" /></Label></Big>
          <Big $w={34}><Icon name="pointer" /><Label>选择<Icon name="caret" /></Label></Big>
        </Group>
      </Ribbon>

      <QuickBar>
        <Tools items={[["folder", 19], ["save", 19], ["pdf", 19], ["print", 19], ["preview", 19], ["undo", 19], ["redo", 19], "||", ["bigcaret"], ["redw", 24]]} />
        <FileTab>
          <Icon name="wdoc" />
          <span>4-Java基本语法2（函数&amp;数组）.docx</span>
          <Cell $w={16} aria-label="close"><Icon name="closeThin" /></Cell>
        </FileTab>
        <Tools items={[["plus", 24]]} />
        <Spacer />
        <Tools items={[["present"], ["flag"], "|"]} />
        <Command><Icon name="search" /><input aria-label="点此查找命令" placeholder="点此查找命令" /></Command>
      </QuickBar>

      <Main>
        <Pane>
          <PaneTabs>
            <PaneTab $on>文档结构图</PaneTab>
            <PaneRule $w={20} />
            <PaneTab>书签</PaneTab>
            <PaneClose aria-label="close"><Icon name="closeThin" /></PaneClose>
          </PaneTabs>
          <Tree>
            <ul>
              {tree.map(([level, text, kind]) => (
                <TreeRow key={text} $level={level} $parent={kind === "p"} $on={kind === "on"}>
                  {kind === "p" && <Icon name="tri" />}{text}
                </TreeRow>
              ))}
            </ul>
            <TreeThumb />
          </Tree>
          <PaneFoot>
            <Drop><select aria-label="显示级别"><option>显示级别</option></select><Icon name="caret" /></Drop>
            <Drop><select aria-label="缩放"><option>&nbsp;&nbsp;100%</option></select><Icon name="caret" /></Drop>
          </PaneFoot>
        </Pane>

        <Doc>
          <Heading>2.5.1. java 的内存组成</Heading>
          <Figure>
            <Caption><Half>java</Half>程序</Caption>
            <Frame>
              {blocks.map((b, i) => (
                <Block key={i} $tight={b.tight}>{b.lines.map((l) => <Line key={l} text={l} />)}</Block>
              ))}
            </Frame>
          </Figure>
          <Heading>2.5.2. 数组的内存图解</Heading>
          <Para>需求 1：画出下面代码执行的内存图解：</Para>
          <CodeBox>
            <div>public static void main(String[] <Typo>args</Typo>)</div>
            <div>{"{"}</div>
          </CodeBox>
        </Doc>

        <Scroll>
          <ScrollBtn aria-label="ruler"><Icon name="ruler" /></ScrollBtn>
          <ScrollBtn $dark aria-label="up"><Icon name="up" /></ScrollBtn>
          <Track $grow={234} />
          <Thumb><i /><i /><i /></Thumb>
          <Track $grow={154} />
          <ScrollBtn $dark aria-label="down"><Icon name="down" /></ScrollBtn>
          <ScrollBtn aria-label="previous page"><Icon name="pageup" /></ScrollBtn>
          <ScrollBtn aria-label="browse"><Icon name="ring" /></ScrollBtn>
          <ScrollBtn aria-label="next page"><Icon name="pagedown" /></ScrollBtn>
        </Scroll>
        <Rail>
          <Grip />
          {rail.map(([icon, name]) => <RailItem key={name}><Icon name={icon} /><span>{name}</span></RailItem>)}
          <RailMore aria-label="more"><Icon name="chevron" /></RailMore>
        </Rail>
        <Edge>
          <Track $grow={229} />
          <Handle aria-label="collapse"><Icon name="play" /></Handle>
          <Track $grow={192} />
        </Edge>
      </Main>

      <Status>
        字数: 4447<Rule $w={8} $h={14} /><Dot />拼写检查<Rule $w={8} $h={14} />
        <Spacer />
        <Views>
          <Tools items={[["full", 32], ["readview", 32], ["outline", 32]]} />
          <ViewOn><Tools items={[["web", 32], ["bulb", 28], "v"]} /></ViewOn>
        </Views>
        100 %
        <Tools items={[["minus", 20]]} />
        <Zoom type="range" aria-label="zoom" defaultValue={50} />
        <Tools items={[["plus", 16], ["expand", 16]]} />
      </Status>
      <Taskbar>
        <Dock>
          <DockApp aria-label="clover"><Icon name="clover" /></DockApp>
          <DockApp aria-label="chrome"><Icon name="chrome" /></DockApp>
          <DockApp aria-label="firefox"><Icon name="firefox" /></DockApp>
          <DockApp $on aria-label="editor"><Icon name="editor" /></DockApp>
        </Dock>
        <Mark>@51CTO博客</Mark>
      </Taskbar>
      <Cursor><Icon name="cursor" /></Cursor>
    </Window>
  );
}
